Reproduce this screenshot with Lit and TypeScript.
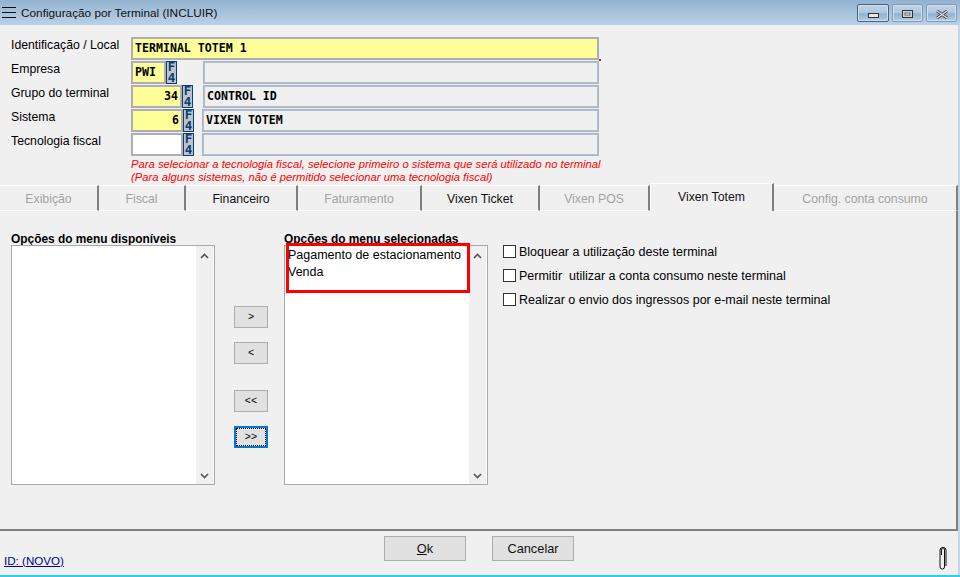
import { LitElement, html, css } from "lit";
import { customElement } from "lit/decorators.js";

const tabs = [
  { t: "Exibição", w: 99, on: false },
  { t: "Fiscal", w: 87, on: false },
  { t: "Financeiro", w: 112, on: true },
  { t: "Faturamento", w: 124, on: false },
  { t: "Vixen Ticket", w: 118, on: true },
  { t: "Vixen POS", w: 110, on: false },
  { t: "Vixen Totem", w: 124, on: true, active: true },
  { t: "Config. conta consumo", w: 184, on: false },
];

const rows = [
  { label: "Empresa", val: "PWI", cls: "w34 yellow left", desc: "", gap: "g27" },
  { label: "Grupo do terminal", val: "34", cls: "w51 yellow", desc: "CONTROL ID", gap: "g11" },
  { label: "Sistema", val: "6", cls: "w52 yellow", desc: "VIXEN TOTEM", gap: "g9" },
  { label: "Tecnologia fiscal", val: "", cls: "w52", desc: "", gap: "g9" },
];

const checks = [
  "Bloquear a utilização deste terminal",
  "Permitir  utilizar a conta consumo neste terminal",
  "Realizar o envio dos ingressos por e-mail neste terminal",
];

@customElement("app-root")
export class AppRoot extends LitElement {
  static styles = css`
    :host { display: block; width: 960px; height: 577px; overflow: hidden; font-family: "Liberation Sans", Arial, sans-serif; font-size: 12px; color: #000; background: #f0f0f0; }
    * { box-sizing: border-box; }
    .win { display: flex; flex-direction: column; height: 577px; border-right: 2px solid #c5d6e6; }
    .title { height: 25px; flex: none; display: flex; align-items: center; background: linear-gradient(#94b3d0, #b9d1e8); padding-left: 2px; margin-right: -2px; }
    .ham { width: 14px; height: 11px; border-top: 1px solid #111; border-bottom: 1px solid #111; position: relative; margin-right: 5px; flex: none; }
    .ham::after { content: ""; position: absolute; left: 0; right: 0; top: 4px; height: 1px; background: #111; }
    .title-text { font-size: 11.8px; color: #111; white-space: nowrap; }
    .ctrls { margin-left: auto; display: flex; gap: 3px; padding-right: 3px; margin-top: 1px; }
    .cb { height: 18px; width: 31px; border: 1px solid #8099b5; border-radius: 2px; background: linear-gradient(#c0d4e8 0%, #adc6e0 50%, #8fb0d0 55%, #b6cde4 100%); display: flex; align-items: center; justify-content: center; box-shadow: inset 0 0 0 1px #cfe0f0; padding-top: 2px; }
    .cb.first { width: 32px; border-color: #4d6079; padding-top: 5px; }
    .cb svg { display: block; }

    .form { height: 160px; flex: none; padding: 12px 0 0 0; position: relative; }
    .row { display: flex; height: 24px; }
    .lab { width: 131px; padding-left: 11px; line-height: 16px; height: 16px; white-space: nowrap; font-size: 12.25px; }
    .inp { height: 23px; border: 2px solid #adadb5; background: #fff; font-family: "DejaVu Sans Mono", monospace; font-weight: bold; font-size: 11.6px; line-height: 19px; padding: 0 2px; text-align: right; white-space: pre; flex: none; }
    .yellow { background: #ffff99; }
    .left { text-align: left; }
    .w34 { width: 35px; }
    .w51 { width: 51px; }
    .w52 { width: 52px; }
    .w468 { width: 468px; text-align: left; }
    .f4 { width: 11px; height: 23px; flex: none; background: #bfc3c8; border: 1px solid #0a3f78; color: #0a3f78; font-family: "DejaVu Sans Mono", monospace; font-weight: bold; font-size: 12.5px; line-height: 10.5px; word-break: break-all; text-align: center; }
    .desc { height: 23px; width: 396px; border: 2px solid #a9c1da; outline: 1px solid #b3b3ba; outline-offset: -1px; background: #f0f0f0; font-family: "DejaVu Sans Mono", monospace; font-weight: bold; font-size: 11.6px; line-height: 19px; padding: 0 2px; white-space: pre; flex: none; }
    .g27 { margin-left: 26px; }
    .g11 { margin-left: 10px; }
    .g9 { margin-left: 8px; width: 397px; }
    .note { margin: 1px 0 0 131px; color: #f00; font-style: italic; font-size: 11.26px; line-height: 13px; white-space: nowrap; }
    .dot { position: absolute; left: 599px; top: 34px; width: 2px; height: 2px; background: #b02020; }

    .tabs { height: 26px; flex: none; display: flex; align-items: stretch; }
    .tab { border-top: 1px solid #fff; border-bottom: 1px solid #fff; border-right: 2px solid #7f7f7f; color: #a3a3a3; text-align: center; line-height: 26px; white-space: nowrap; height: 26px; flex: none; font-size: 12.25px; }
    .tab.on { color: #111; }
    .tab.active { height: 28px; margin-top: -2px; border-bottom: none; border-left: 1px solid #fff; line-height: 26px; color: #111; background: #f0f0f0; position: relative; z-index: 1; }

    .panel { height: 320px; flex: none; border-right: 2px solid #7f7f7f; border-bottom: 2px solid #7f7f7f; position: relative; padding: 34px 0 0 11px; display: grid; grid-template-columns: 204px 69px 204px auto; }
    .col { display: flex; flex-direction: column; }
    .head { font-weight: bold; font-size: 11.9px; line-height: 14px; height: 0; position: relative; top: -13px; white-space: nowrap; }
    .list { width: 204px; height: 240px; border: 1px solid #a9a9a9; background: #fff; position: relative; display: flex; }
    .items { flex: 1; padding: 1px 3px; line-height: 17px; font-size: 12.5px; white-space: nowrap; }
    .sb { width: 17px; margin: 0 1px 0 0; background: #f0f0f0; display: flex; flex-direction: column; justify-content: space-between; align-items: center; padding: 7px 0 5px; }
    .sb svg { display: block; }
    .mid { padding: 61px 0 0 19px; display: flex; flex-direction: column; }
    .mv { width: 34px; height: 22px; border: 1px solid #adadad; background: #e1e1e1; font-size: 10.5px; line-height: 17px; text-align: center; padding: 0 0 2px; margin-bottom: 14px; font-family: "Liberation Sans", sans-serif; color: #000; }
    .mv.sp { margin-top: 12px; }
    .mv.focus { border: 2px solid #0078d7; position: relative; padding: 0; }
    .mv.focus span { display: block; border: 1px dotted #000; height: 18px; line-height: 14px; margin: 0; }
    .mark { position: absolute; left: 286px; top: 32px; width: 184px; height: 50px; border: 3px solid #f00; pointer-events: none; }
    .checks { margin-left: 15px; display: flex; flex-direction: column; gap: 11px; }
    .chk { display: flex; align-items: center; height: 13px; white-space: pre; font-size: 12.5px; }
    .box { width: 13px; height: 13px; border: 1px solid #333; background: #fff; margin-right: 3px; flex: none; }

    .foot { flex: 1; display: flex; position: relative; }
    .idc { width: 384px; padding: 22px 0 0 4px; }
    .idc a { color: #00008b; text-decoration: underline; font-size: 11.6px; line-height: 16px; }
    .btns { display: flex; gap: 26px; padding-top: 5px; }
    .bt { width: 82px; height: 25px; border: 1px solid #adadad; background: #e1e1e1; font-family: "Liberation Sans", sans-serif; font-size: 12.8px; padding: 0; color: #111; }
    .bt u { text-decoration: underline; }
    .clip { margin-left: auto; margin-right: 11px; padding-top: 16px; }
    .clip svg { display: block; }
    .cyan { height: 2px; flex: none; background: #2ccfee; margin-right: -2px; }
  `;

  render() {
    const chev = (up: boolean) => html`<svg width="9" height="6" viewBox="0 0 9 6"><path d=${up ? "M1 5 L4.5 1.5 L8 5" : "M1 1 L4.5 4.5 L8 1"} fill="none" stroke="#555" stroke-width="1.7"/></svg>`;
    const sb = html`<div class="sb">${chev(true)}${chev(false)}</div>`;
    return html`
      <div class="win">
        <div class="title">
          <div class="ham"></div>
          <div class="title-text">Configuração por Terminal (INCLUIR)</div>
          <div class="ctrls">
            <div class="cb first"><svg width="11" height="5"><rect x=".5" y=".5" width="10" height="4" fill="#e8e8ec" stroke="#333"/></svg></div>
            <div class="cb"><svg width="11" height="8"><rect x=".5" y=".5" width="10" height="7" fill="#c9d4e0" stroke="#333"/><rect x="3" y="3" width="5" height="2" fill="#fff" stroke="#333" stroke-width=".7"/></svg></div>
            <div class="cb"><svg width="12" height="9" viewBox="0 0 12 9"><path d="M1 1 L11 8 M11 1 L1 8" stroke="#444" stroke-width="3"/><path d="M1 1 L11 8 M11 1 L1 8" stroke="#dde" stroke-width="1.4"/></svg></div>
          </div>
        </div>

        <div class="form">
          <div class="row">
            <div class="lab">Identificação / Local</div>
            <div class="inp yellow w468">TERMINAL TOTEM 1</div>
          </div>
          ${rows.map(r => html`
            <div class="row">
              <div class="lab">${r.label}</div>
              <div class="inp ${r.cls}">${r.val}</div>
              <div class="f4">F4</div>
              <div class="desc ${r.gap}">${r.desc}</div>
            </div>`)}
          <div class="note">Para selecionar a tecnologia fiscal, selecione primeiro o sistema que será utilizado no terminal<br>(Para alguns sistemas, não é permitido selecionar uma tecnologia fiscal)</div>
          <div class="dot"></div>
        </div>

        <div class="tabs">
          ${tabs.map(t => html`<div class="tab ${t.on ? "on" : ""} ${t.active ? "active" : ""}" style="width:${t.w}px">${t.t}</div>`)}
        </div>

        <div class="panel">
          <div class="col">
            <div class="head">Opções do menu disponíveis</div>
            <div class="list"><div class="items"></div>${sb}</div>
          </div>
          <div class="mid">
            <button class="mv">&gt;</button>
            <button class="mv">&lt;</button>
            <button class="mv sp">&lt;&lt;</button>
            <button class="mv focus"><span>&gt;&gt;</span></button>
          </div>
          <div class="col">
            <div class="head">Opções do menu selecionadas</div>
            <div class="list">
              <div class="items">Pagamento de estacionamento<br>Venda</div>
              ${sb}
            </div>
          </div>
          <div class="checks">
            ${checks.map(c => html`<div class="chk"><span class="box"></span>${c}</div>`)}
          </div>
          <div class="mark"></div>
        </div>

        <div class="foot">
          <div class="idc"><a href="#">ID: (NOVO)</a></div>
          <div class="btns">
            <button class="bt"><u>O</u>k</button>
            <button class="bt">Cancelar</button>
          </div>
          <div class="clip">
            <svg width="8" height="23" viewBox="0 0 8 23"><path d="M2.5 8 V3 Q2.5 .8 4 .8 Q5.5 .8 5.5 3 V18 M5.5 5 V20 Q5.5 22 3.5 22 Q1 22 1 20 V3 Q1 .6 3.5 .6 H4.5 Q7 .6 7 3 V19" fill="none" stroke="#111" stroke-width="1"/></svg>
          </div>
        </div>
        <div class="cyan"></div>
      </div>
    `;
  }
}
